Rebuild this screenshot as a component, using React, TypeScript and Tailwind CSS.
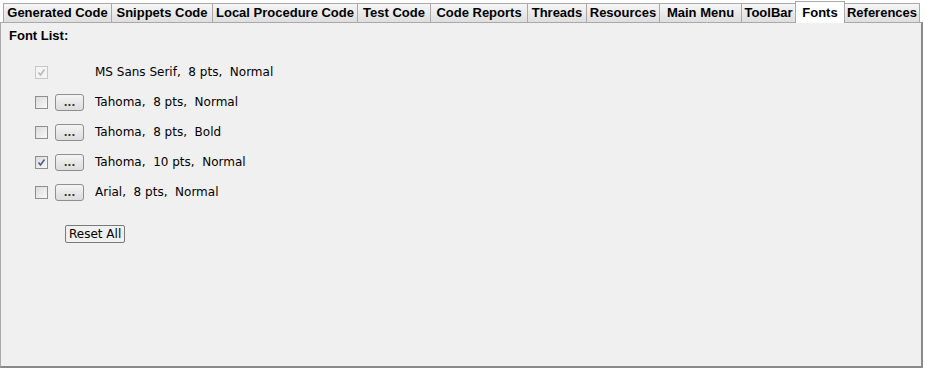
import React, { useState } from 'react';

const tabs = [
  { label: 'Generated Code', w: 109 },
  { label: 'Snippets Code', w: 102 },
  { label: 'Local Procedure Code', w: 146 },
  { label: 'Test Code', w: 74 },
  { label: 'Code Reports', w: 98 },
  { label: 'Threads', w: 60 },
  { label: 'Resources', w: 74 },
  { label: 'Main Menu', w: 83 },
  { label: 'ToolBar', w: 55 },
  { label: 'Fonts', w: 50 },
  { label: 'References', w: 76 },
];

const fonts = [
  { name: 'MS Sans Serif,  8 pts,  Normal', checked: true, fixed: true },
  { name: 'Tahoma,  8 pts,  Normal', checked: false },
  { name: 'Tahoma,  8 pts,  Bold', checked: false },
  { name: 'Tahoma,  10 pts,  Normal', checked: true },
  { name: 'Arial,  8 pts,  Normal', checked: false },
];

function Check({ checked, disabled }: { checked: boolean; disabled?: boolean }) {
  return (
    <div
      className={`w-[13px] h-[13px] border flex items-center justify-center ${
        disabled ? 'border-[#c8c8c8] bg-[#f4f4f4]' : 'border-[#8e8f8f] bg-gradient-to-br from-[#dcdcdc] to-[#f8f8f8]'
      }`}
    >
      {checked && (
        <svg width="9" height="9" viewBox="0 0 9 9">
          <path
            d="M1.5 4.5 L3.5 7 L7.5 1.5"
            fill="none"
            stroke={disabled ? '#b8b8b8' : '#4a5f8c'}
            strokeWidth="1.6"
          />
        </svg>
      )}
    </div>
  );
}

export default function App() {
  const [active] = useState('Fonts');

  return (
    <div className="w-[925px] h-[371px] bg-white font-['DejaVu_Sans',sans-serif] text-[12px] text-black">
      <div className="flex items-end h-[22px] pl-[3px]">
        {tabs.map((t) =>
          t.label === active ? (
            <div
              key={t.label}
              style={{ width: t.w }}
              className="h-[22px] bg-white border-t border-l border-r border-[#a9a9a9] flex justify-center pt-[1px] font-bold text-[13px] font-['Liberation_Sans',sans-serif] relative z-10 -mb-px pb-px -mr-px"
            >
              {t.label}
            </div>
          ) : (
            <div
              key={t.label}
              style={{ width: t.w }}
              className="h-[19px] bg-gradient-to-b from-[#f6f6f6] to-[#dedede] border-t border-l border-r border-[#a9a9a9] flex items-center justify-center font-bold text-[13px] font-['Liberation_Sans',sans-serif] -mr-px whitespace-nowrap"
            >
              {t.label}
            </div>
          )
        )}
      </div>
      <div className="w-[923px] h-[346px] bg-[#f0f0f0] border-t border-l border-[#a9a9a9] border-r-2 border-b-2 border-r-[#8a8a8a] border-b-[#8a8a8a] pl-[8px] pt-[3px]">
        <div className="font-bold text-[13px] font-['Liberation_Sans',sans-serif]">Font List:</div>
        <div className="flex flex-col gap-[13px] pl-[26px] pt-[18px]">
          {fonts.map((f) => (
            <div key={f.name} className="flex items-center h-[17px]">
              <Check checked={f.checked} disabled={f.fixed} />
              <div className="w-[29px] ml-[7px] mr-[11px]">
                {!f.fixed && (
                  <button className="w-[29px] h-[17px] rounded-[3px] border border-[#8f8f8f] bg-gradient-to-b from-[#f4f4f4] to-[#dcdcdc] flex items-end justify-center pb-[2px] text-[10px] leading-none font-bold text-[#333]">
                    ...
                  </button>
                )}
              </div>
              <span className="whitespace-pre">{f.name}</span>
            </div>
          ))}
        </div>
        <div className="pl-[56px] pt-[24px]">
          <button className="h-[18px] px-[3px] border border-[#7a7a7a] rounded-[2px] bg-[#f0f0f0] flex items-center text-[12px] leading-none">
            Reset All
          </button>
        </div>
      </div>
    </div>
  );
}
